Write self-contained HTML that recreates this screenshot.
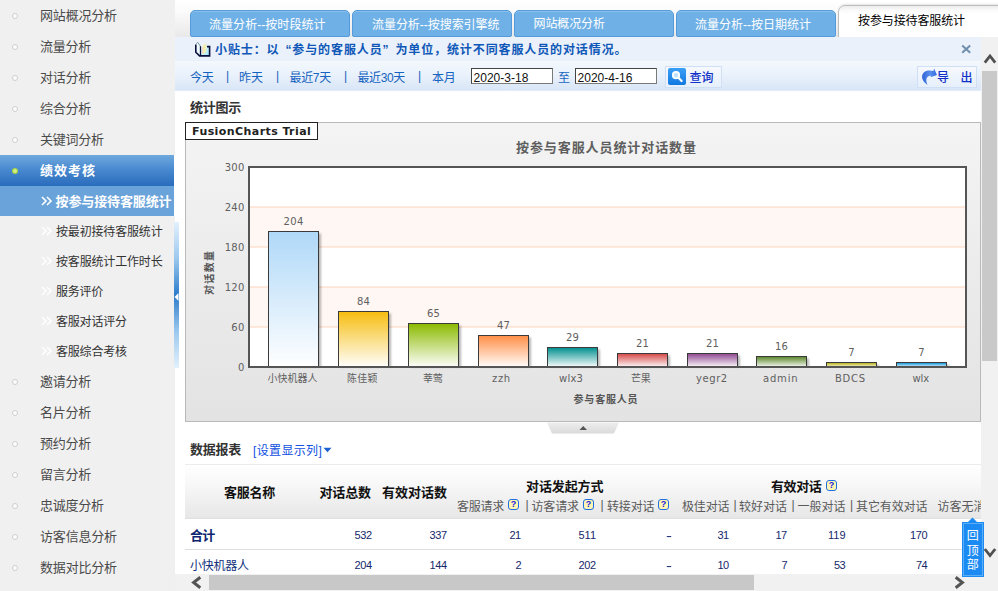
<!DOCTYPE html>
<html lang="zh-CN">
<head>
<meta charset="utf-8">
<title>按参与接待客服统计</title>
<style>
html,body{margin:0;padding:0;}
body{width:998px;height:591px;overflow:hidden;position:relative;background:#fff;font-family:"Liberation Sans","Noto Sans CJK SC",sans-serif;font-size:12px;color:#333;}
.a{position:absolute;}
.t{position:absolute;white-space:nowrap;}
#side{position:absolute;left:0;top:0;width:175px;height:591px;background:#f0f0f0;}
#side .dot{position:absolute;left:12px;width:4px;height:4px;border-radius:50%;border:1px solid #cecece;background:#fdfdfd;}
.tab{position:absolute;top:10px;height:25px;width:157.5px;background:#6fb1e6;border:1px solid #559bdb;border-radius:5px 5px 2px 2px;box-shadow:inset 0 1px 0 rgba(255,255,255,0.18);}
.help{position:absolute;width:9px;height:9px;border:1px solid #1f6fe0;border-radius:3px;background:#fff6b4;font:bold 9px/9.5px "Liberation Sans",sans-serif;color:#2020e0;text-align:center;font-style:normal;}
</style>
</head>
<body>
<!-- sidebar -->
<div id="side">
<div class="a" style="left:0;top:155px;width:174px;height:31px;background:linear-gradient(#6fa9dd 0%,#4a8ad0 45%,#2a6cbd 100%);border-right:1px solid #fff;"></div>
<div class="a" style="left:0;top:186px;width:174px;height:30px;background:#6aa3da;border-right:1px solid #fff;"></div>
<i class="a" style="left:12px;top:168px;width:6px;height:6px;border-radius:50%;background:radial-gradient(#d8f08a 20%,#9fcf3a 70%,#6fa0c0 100%);"></i>
<i class="dot" style="top:13.0px"></i>
<i class="dot" style="top:44.1px"></i>
<i class="dot" style="top:75.2px"></i>
<i class="dot" style="top:106.0px"></i>
<i class="dot" style="top:137.0px"></i>
<i class="dot" style="top:379.0px"></i>
<i class="dot" style="top:410.0px"></i>
<i class="dot" style="top:441.0px"></i>
<i class="dot" style="top:472.0px"></i>
<i class="dot" style="top:503.0px"></i>
<i class="dot" style="top:534.0px"></i>
<i class="dot" style="top:565.0px"></i>
<svg class="a" style="left:41px;top:195px" width="12" height="12" viewBox="0 0 12 12"><path d="M1 2 L5 6 L1 10 M6 2 L10 6 L6 10" fill="none" stroke="#fff" stroke-width="1.6"/></svg>
<svg class="a" style="left:41px;top:225px" width="12" height="12" viewBox="0 0 12 12"><path d="M1 2 L5 6 L1 10 M6 2 L10 6 L6 10" fill="none" stroke="#fff" stroke-width="1.4"/></svg>
<svg class="a" style="left:41px;top:255px" width="12" height="12" viewBox="0 0 12 12"><path d="M1 2 L5 6 L1 10 M6 2 L10 6 L6 10" fill="none" stroke="#fff" stroke-width="1.4"/></svg>
<svg class="a" style="left:41px;top:285px" width="12" height="12" viewBox="0 0 12 12"><path d="M1 2 L5 6 L1 10 M6 2 L10 6 L6 10" fill="none" stroke="#fff" stroke-width="1.4"/></svg>
<svg class="a" style="left:41px;top:315px" width="12" height="12" viewBox="0 0 12 12"><path d="M1 2 L5 6 L1 10 M6 2 L10 6 L6 10" fill="none" stroke="#fff" stroke-width="1.4"/></svg>
<svg class="a" style="left:41px;top:345px" width="12" height="12" viewBox="0 0 12 12"><path d="M1 2 L5 6 L1 10 M6 2 L10 6 L6 10" fill="none" stroke="#fff" stroke-width="1.4"/></svg>
</div>
<!-- splitter -->
<div class="a" style="left:174px;top:222px;width:5px;height:146px;background:linear-gradient(#e3f1fd 0%,#9cc8ee 25%,#2c7ccb 50%,#9cc8ee 75%,#e3f1fd 100%);"></div>
<svg class="a" style="left:174px;top:292px" width="5" height="10" viewBox="0 0 5 10"><path d="M4.5 1 L0.5 5 L4.5 9 Z" fill="#fff"/></svg>
<!-- tab strip -->
<div class="a" style="left:175px;top:0;width:823px;height:37px;background:linear-gradient(#ffffff 0%,#fbfbfb 30%,#e9e9e9 100%);"></div>
<div class="a" style="left:174px;top:0;width:1px;height:37px;background:#f0f0f0;"></div>
<div class="tab" style="left:190px"></div>
<div class="tab" style="left:352px"></div>
<div class="tab" style="left:514px"></div>
<div class="tab" style="left:676px"></div>
<div class="a" style="left:838px;top:5px;width:170px;height:40px;background:linear-gradient(#ececec 0px,#fafafa 4px,#fff 8px,#fff 100%);border:1px solid #bdbdbd;border-radius:7px 0 0 0;box-shadow:0 -1px 2px rgba(0,0,0,0.10);"></div>
<!-- tip bar -->
<div class="a" style="left:175px;top:37px;width:806px;height:24px;background:#ebf1fa;"></div>
<!-- filter bar -->
<div class="a" style="left:175px;top:61px;width:806px;height:29px;background:linear-gradient(#f4f8fd 0%,#e9f1fb 50%,#d9e6f7 100%);border-bottom:1px solid #e2ecf9;"></div>
<!-- tip icon -->
<svg class="a" style="left:194px;top:41px" width="17" height="17" viewBox="0 0 17 17">
<defs><linearGradient id="bk" x1="0" y1="0" x2="1" y2="1"><stop offset="0" stop-color="#ffffff"/><stop offset="1" stop-color="#9be4fa"/></linearGradient></defs>
<path d="M3.6 1.2 L6.2 5 L6.2 14 L1.6 11 L1.6 3.6 Z" fill="#eefbff"/>
<path d="M6.8 5.2 L9 3.6 L12.5 3.2 L12.5 5.2 L15.2 5.2 L15.2 14.6 L6.8 14.6 Z" fill="url(#bk)"/>
<path d="M8.6 4.6 C9.8 3.4 11 3 12.4 3.1 L12.3 10.5 C11.4 12.2 10 13 8.6 13.2 Z" fill="#f1f0b2"/>
<path d="M8.8 6 L8.8 12.6" stroke="#f6c8b8" stroke-width="0.9" fill="none"/>
<path d="M1.8 3.4 L1.8 11.2 L5.6 14.9 L15.6 14.9 L15.6 5.6 L13 5.6" fill="none" stroke="#0a0f3c" stroke-width="1.6" stroke-linejoin="miter"/>
<path d="M1.7 3.6 L3.6 1.2" stroke="#7f98a8" stroke-width="0.9" fill="none"/>
<path d="M6.5 5.2 L6.5 14.4" stroke="#0a0f3c" stroke-width="1.3" fill="none"/>
<path d="M3.7 1.3 L6.3 5" stroke="#5a7a8a" stroke-width="0.8" fill="none"/>
</svg>
<!-- close x -->
<svg class="a" style="left:961px;top:44px" width="11" height="10" viewBox="0 0 11 10"><path d="M1.2 1.4 L9.2 8.8 M9.2 1.4 L1.2 8.8" stroke="#6f8fae" stroke-width="2" fill="none"/></svg>
<!-- date inputs -->
<div class="a" style="left:471px;top:68px;width:80px;height:14px;background:#fff;border:1px solid #7a7a7a;border-top-color:#444;border-left-color:#444;"></div>
<div class="a" style="left:575px;top:68px;width:80px;height:14px;background:#fff;border:1px solid #7a7a7a;border-top-color:#444;border-left-color:#444;"></div>
<!-- search button -->
<div class="a" style="left:665px;top:66px;width:55px;height:20px;background:linear-gradient(#f6f9fe,#e6effb);border:1px solid #cfdff5;"></div>
<svg class="a" style="left:668px;top:68px" width="18" height="17" viewBox="0 0 18 17">
<defs><linearGradient id="sb" x1="0" y1="0" x2="0" y2="1"><stop offset="0" stop-color="#3aa0f6"/><stop offset="1" stop-color="#1278e0"/></linearGradient></defs>
<rect x="0" y="0" width="18" height="17" rx="2" fill="url(#sb)"/>
<circle cx="8" cy="7.2" r="3.2" fill="#bfe2ff" stroke="#fff" stroke-width="1.8"/>
<path d="M10.5 9.8 L13.6 13" stroke="#fff" stroke-width="2.2" stroke-linecap="round"/>
</svg>
<!-- export button -->
<div class="a" style="left:917px;top:66px;width:58px;height:20px;background:linear-gradient(#f6f9fe,#e6effb);border:1px solid #cfdff5;"></div>
<svg class="a" style="left:921px;top:67px" width="17" height="19" viewBox="0 0 17 19">
<defs><linearGradient id="ex" x1="0" y1="0" x2="1" y2="0"><stop offset="0" stop-color="#2f66d6"/><stop offset="0.55" stop-color="#5a8fee"/><stop offset="1" stop-color="#2f6ae0"/></linearGradient></defs>
<path d="M13.1 1.5 L16 8 L9.4 10.2 L10 8.5 C7.4 8.6 5.3 10.4 5.3 13 C5.3 14.8 5.8 16.4 6.7 17.9 C3 16 0.5 12.4 1.2 8.6 C2 4.2 7 2.4 12.4 4 Z" fill="url(#ex)"/>
</svg>
<!-- chart -->
<svg class="a" style="left:0;top:0" width="998" height="591" viewBox="0 0 998 591" shape-rendering="auto">
<defs>
<linearGradient id="g0" x1="0" y1="0" x2="0" y2="1"><stop offset="0" stop-color="#AFD8F8"/><stop offset="1" stop-color="#ffffff"/></linearGradient>
<linearGradient id="g1" x1="0" y1="0" x2="0" y2="1"><stop offset="0" stop-color="#F6BD0F"/><stop offset="1" stop-color="#ffffff"/></linearGradient>
<linearGradient id="g2" x1="0" y1="0" x2="0" y2="1"><stop offset="0" stop-color="#8BBA00"/><stop offset="1" stop-color="#ffffff"/></linearGradient>
<linearGradient id="g3" x1="0" y1="0" x2="0" y2="1"><stop offset="0" stop-color="#FF8E46"/><stop offset="1" stop-color="#ffffff"/></linearGradient>
<linearGradient id="g4" x1="0" y1="0" x2="0" y2="1"><stop offset="0" stop-color="#008E8E"/><stop offset="1" stop-color="#ffffff"/></linearGradient>
<linearGradient id="g5" x1="0" y1="0" x2="0" y2="1"><stop offset="0" stop-color="#D64646"/><stop offset="1" stop-color="#ffffff"/></linearGradient>
<linearGradient id="g6" x1="0" y1="0" x2="0" y2="1"><stop offset="0" stop-color="#8E468E"/><stop offset="1" stop-color="#ffffff"/></linearGradient>
<linearGradient id="g7" x1="0" y1="0" x2="0" y2="1"><stop offset="0" stop-color="#588526"/><stop offset="1" stop-color="#ffffff"/></linearGradient>
<linearGradient id="g8" x1="0" y1="0" x2="0" y2="1"><stop offset="0" stop-color="#B3AA00"/><stop offset="1" stop-color="#ffffff"/></linearGradient>
<linearGradient id="g9" x1="0" y1="0" x2="0" y2="1"><stop offset="0" stop-color="#008ED6"/><stop offset="1" stop-color="#ffffff"/></linearGradient>
<linearGradient id="cbg" x1="0" y1="0" x2="0" y2="1"><stop offset="0" stop-color="#f4f4f4"/><stop offset="1" stop-color="#e3e3e3"/></linearGradient>
<filter id="bl" x="-10%" y="-10%" width="120%" height="120%"><feGaussianBlur stdDeviation="1"/></filter>
<linearGradient id="trap" x1="0" y1="0" x2="0" y2="1"><stop offset="0" stop-color="#eeeeee"/><stop offset="1" stop-color="#dadada"/></linearGradient>
</defs>
<rect x="185.5" y="122.5" width="795" height="299" fill="url(#cbg)" stroke="#b9b9b9"/>
<rect x="249" y="167" width="717" height="200" fill="#fff"/>
<rect x="249" y="207.0" width="717" height="40.0" fill="#fff7f3"/>
<rect x="249" y="287.0" width="717" height="40.0" fill="#fff7f3"/>
<rect x="249" y="326.5" width="717" height="1" fill="#fbd4bd"/>
<rect x="249" y="286.5" width="717" height="1" fill="#fbd4bd"/>
<rect x="249" y="246.5" width="717" height="1" fill="#fbd4bd"/>
<rect x="249" y="206.5" width="717" height="1" fill="#fbd4bd"/>
<rect x="270.5" y="233.5" width="50.5" height="133.5" fill="#000" opacity="0.28" filter="url(#bl)"/>
<rect x="268.5" y="231.5" width="50" height="136.0" fill="url(#g0)" stroke="#3a3a3a" stroke-width="1"/>
<rect x="340.5" y="313.5" width="50.5" height="53.5" fill="#000" opacity="0.28" filter="url(#bl)"/>
<rect x="338.5" y="311.5" width="50" height="56.0" fill="url(#g1)" stroke="#3a3a3a" stroke-width="1"/>
<rect x="410.5" y="325.5" width="50.5" height="41.5" fill="#000" opacity="0.28" filter="url(#bl)"/>
<rect x="408.5" y="323.5" width="50" height="44.0" fill="url(#g2)" stroke="#3a3a3a" stroke-width="1"/>
<rect x="480.5" y="337.5" width="50.5" height="29.5" fill="#000" opacity="0.28" filter="url(#bl)"/>
<rect x="478.5" y="335.5" width="50" height="32.0" fill="url(#g3)" stroke="#3a3a3a" stroke-width="1"/>
<rect x="549.5" y="349.5" width="50.5" height="17.5" fill="#000" opacity="0.28" filter="url(#bl)"/>
<rect x="547.5" y="347.5" width="50" height="20.0" fill="url(#g4)" stroke="#3a3a3a" stroke-width="1"/>
<rect x="619.5" y="355.5" width="50.5" height="11.5" fill="#000" opacity="0.28" filter="url(#bl)"/>
<rect x="617.5" y="353.5" width="50" height="14.0" fill="url(#g5)" stroke="#3a3a3a" stroke-width="1"/>
<rect x="689.5" y="355.5" width="50.5" height="11.5" fill="#000" opacity="0.28" filter="url(#bl)"/>
<rect x="687.5" y="353.5" width="50" height="14.0" fill="url(#g6)" stroke="#3a3a3a" stroke-width="1"/>
<rect x="758.5" y="358.5" width="50.5" height="8.5" fill="#000" opacity="0.28" filter="url(#bl)"/>
<rect x="756.5" y="356.5" width="50" height="11.0" fill="url(#g7)" stroke="#3a3a3a" stroke-width="1"/>
<rect x="828.5" y="364.5" width="50.5" height="2.5" fill="#000" opacity="0.28" filter="url(#bl)"/>
<rect x="826.5" y="362.5" width="50" height="5.0" fill="url(#g8)" stroke="#3a3a3a" stroke-width="1"/>
<rect x="898.5" y="364.5" width="50.5" height="2.5" fill="#000" opacity="0.28" filter="url(#bl)"/>
<rect x="896.5" y="362.5" width="50" height="5.0" fill="url(#g9)" stroke="#3a3a3a" stroke-width="1"/>
<rect x="249" y="167" width="717" height="200" fill="none" stroke="#555" stroke-width="2"/>
<rect x="185.5" y="122.5" width="132" height="17" fill="#fff" stroke="#222"/>
<path d="M547 422.5 L619 422.5 L614 433.5 L552 433.5 Z" fill="url(#trap)"/>
<path d="M579.5 430 L583.2 426 L587 430 Z" fill="#555"/>
</svg>
<!-- y axis title -->
<span class="a" style="left:209px;top:273px;width:0;height:0;"><span style="position:absolute;left:-30px;top:-7px;width:60px;height:14px;line-height:14px;text-align:center;transform:rotate(-90deg);font:bold 10px/14px 'Noto Sans CJK SC',sans-serif;color:#555;white-space:nowrap;letter-spacing:1.3px;text-indent:1.3px;">对话数量</span></span>
<!-- dropdown arrow -->
<svg class="a" style="left:323px;top:447px" width="9" height="6" viewBox="0 0 9 6"><path d="M0.5 0.8 L8.5 0.8 L4.5 5.2 Z" fill="#1c5fd0"/></svg>
<!-- table -->
<div class="a" style="left:185px;top:464px;width:796px;height:54px;background:linear-gradient(#ffffff 0%,#f7f7f7 40%,#e7e7e7 100%);border-top:1px solid #ececec;box-sizing:border-box;"></div>
<div class="a" style="left:185px;top:518px;width:796px;height:1px;background:#e0e0e0;"></div>
<div class="a" style="left:185px;top:549px;width:796px;height:1px;background:#dedede;"></div>
<!-- help icons -->
<i class="help" style="left:508px;top:499px">?</i><i class="help" style="left:583px;top:499px">?</i><i class="help" style="left:658px;top:499px">?</i><i class="help" style="left:826px;top:480px">?</i>
<!-- clipped header -->
<div class="a" style="left:937px;top:496px;width:44px;height:20px;overflow:hidden;"><span style="position:absolute;left:0.5px;top:2px;font:12px/16px 'Noto Sans CJK SC',sans-serif;color:#5a5a5a;white-space:nowrap;">访客无消息对话</span></div>
<!-- h scrollbar -->
<div class="a" style="left:175px;top:574px;width:806px;height:17px;background:#f1f1f1;"></div>
<div class="a" style="left:209px;top:575px;width:545px;height:15px;background:#c8c8c8;"></div>
<svg class="a" style="left:190px;top:576px" width="13" height="13" viewBox="0 0 13 13"><path d="M10.3 1.2 L3.6 6.5 L10.3 11.8" fill="none" stroke="#555" stroke-width="3"/></svg>
<svg class="a" style="left:953px;top:576px" width="13" height="13" viewBox="0 0 13 13"><path d="M2.7 1.2 L9.4 6.5 L2.7 11.8" fill="none" stroke="#555" stroke-width="3"/></svg>
<!-- v scrollbar -->
<div class="a" style="left:981px;top:37px;width:17px;height:554px;background:#f1f1f1;"></div>
<div class="a" style="left:982px;top:71px;width:15px;height:290px;background:#c9c9c9;"></div>
<svg class="a" style="left:983px;top:52px" width="14" height="12" viewBox="0 0 14 12"><path d="M1.8 10.6 L7 4 L12.2 10.6" fill="none" stroke="#505050" stroke-width="2.8"/></svg>
<svg class="a" style="left:983px;top:546px" width="14" height="12" viewBox="0 0 14 12"><path d="M1.8 3 L7 9.6 L12.2 3" fill="none" stroke="#505050" stroke-width="2.8"/></svg>
<!-- back to top -->
<div class="a" style="left:962px;top:522px;width:22px;height:55px;background:#1b8af3;box-sizing:border-box;border:1px solid #1b8af3;box-shadow:inset 0 0 0 1px #5aaef8;"></div>
<svg class="a" style="left:967px;top:517px" width="11" height="6" viewBox="0 0 11 6"><path d="M0 6 L5.5 0.5 L11 6 Z" fill="#1b8af3"/></svg>
<span class="a" style="left:966.8px;top:528px;width:12px;font:12px/14.5px 'Noto Sans CJK SC',sans-serif;color:#fff;white-space:normal;word-break:break-all;">回顶部</span>
<span class="t" style='left:40.00px;top:7.10px;font:13px/17px "Liberation Sans","Noto Sans CJK SC",sans-serif;color:#4a4a4a;letter-spacing:-0.185px;'>网站概况分析</span>
<span class="t" style='left:40.00px;top:38.10px;font:13px/17px "Liberation Sans","Noto Sans CJK SC",sans-serif;color:#4a4a4a;letter-spacing:-0.290px;'>流量分析</span>
<span class="t" style='left:40.00px;top:69.10px;font:13px/17px "Liberation Sans","Noto Sans CJK SC",sans-serif;color:#4a4a4a;letter-spacing:-0.290px;'>对话分析</span>
<span class="t" style='left:40.00px;top:100.10px;font:13px/17px "Liberation Sans","Noto Sans CJK SC",sans-serif;color:#4a4a4a;letter-spacing:-0.290px;'>综合分析</span>
<span class="t" style='left:40.00px;top:131.10px;font:13px/17px "Liberation Sans","Noto Sans CJK SC",sans-serif;color:#4a4a4a;letter-spacing:-0.226px;'>关键词分析</span>
<span class="t" style='left:40.00px;top:373.10px;font:13px/17px "Liberation Sans","Noto Sans CJK SC",sans-serif;color:#4a4a4a;letter-spacing:-0.290px;'>邀请分析</span>
<span class="t" style='left:40.00px;top:404.10px;font:13px/17px "Liberation Sans","Noto Sans CJK SC",sans-serif;color:#4a4a4a;letter-spacing:-0.290px;'>名片分析</span>
<span class="t" style='left:40.00px;top:435.10px;font:13px/17px "Liberation Sans","Noto Sans CJK SC",sans-serif;color:#4a4a4a;letter-spacing:-0.290px;'>预约分析</span>
<span class="t" style='left:40.00px;top:466.10px;font:13px/17px "Liberation Sans","Noto Sans CJK SC",sans-serif;color:#4a4a4a;letter-spacing:-0.290px;'>留言分析</span>
<span class="t" style='left:40.00px;top:497.10px;font:13px/17px "Liberation Sans","Noto Sans CJK SC",sans-serif;color:#4a4a4a;letter-spacing:-0.226px;'>忠诚度分析</span>
<span class="t" style='left:40.00px;top:528.10px;font:13px/17px "Liberation Sans","Noto Sans CJK SC",sans-serif;color:#4a4a4a;letter-spacing:-0.185px;'>访客信息分析</span>
<span class="t" style='left:40.00px;top:559.10px;font:13px/17px "Liberation Sans","Noto Sans CJK SC",sans-serif;color:#4a4a4a;letter-spacing:-0.185px;'>数据对比分析</span>
<span class="t" style='left:40.00px;top:162.10px;font:bold 13px/17px "Liberation Sans","Noto Sans CJK SC",sans-serif;color:#fff;letter-spacing:0.996px;'>绩效考核</span>
<span class="t" style='left:55.50px;top:193.10px;font:bold 13px/17px "Liberation Sans","Noto Sans CJK SC",sans-serif;color:#fff;letter-spacing:-0.119px;'>按参与接待客服统计</span>
<span class="t" style='left:56.00px;top:224.10px;font:12px/16px "Liberation Sans","Noto Sans CJK SC",sans-serif;color:#333;letter-spacing:-0.167px;'>按最初接待客服统计</span>
<span class="t" style='left:56.00px;top:254.10px;font:12px/16px "Liberation Sans","Noto Sans CJK SC",sans-serif;color:#333;letter-spacing:-0.167px;'>按客服统计工作时长</span>
<span class="t" style='left:56.00px;top:284.10px;font:12px/16px "Liberation Sans","Noto Sans CJK SC",sans-serif;color:#333;letter-spacing:-0.262px;'>服务评价</span>
<span class="t" style='left:56.00px;top:314.10px;font:12px/16px "Liberation Sans","Noto Sans CJK SC",sans-serif;color:#333;letter-spacing:-0.203px;'>客服对话评分</span>
<span class="t" style='left:56.00px;top:344.10px;font:12px/16px "Liberation Sans","Noto Sans CJK SC",sans-serif;color:#333;letter-spacing:-0.203px;'>客服综合考核</span>
<span class="t" style='left:209.00px;top:17.10px;font:12px/16px "Liberation Sans","Noto Sans CJK SC",sans-serif;color:#fff;letter-spacing:0.048px;'>流量分析--按时段统计</span>
<span class="t" style='left:372.00px;top:17.10px;font:12px/16px "Liberation Sans","Noto Sans CJK SC",sans-serif;color:#fff;letter-spacing:-0.043px;'>流量分析--按搜索引擎统</span>
<span class="t" style='left:533.50px;top:16.10px;font:12px/16px "Liberation Sans","Noto Sans CJK SC",sans-serif;color:#fff;letter-spacing:-0.094px;'>网站概况分析</span>
<span class="t" style='left:695.00px;top:17.10px;font:12px/16px "Liberation Sans","Noto Sans CJK SC",sans-serif;color:#fff;'>流量分析--按日期统计</span>
<span class="t" style='left:858.00px;top:13.10px;font:12px/16px "Liberation Sans","Noto Sans CJK SC",sans-serif;color:#000;letter-spacing:-0.119px;'>按参与接待客服统计</span>
<span class="t" style='left:215.00px;top:42.10px;font:bold 12px/16px "Liberation Sans","Noto Sans CJK SC",sans-serif;color:#0f58b8;letter-spacing:0.887px;'>小贴士：以<span style="margin-left:6px">“</span>参与的客服人员<span style="margin-right:6px">”</span>为单位，统计不同客服人员的对话情况。</span>
<span class="t" style='left:190.00px;top:70.10px;font:12px/16px "Liberation Sans","Noto Sans CJK SC",sans-serif;color:#1563c0;letter-spacing:-0.344px;'>今天</span>
<span class="t" style='left:226.00px;top:70.10px;font:12px/16px "Liberation Sans","Noto Sans CJK SC",sans-serif;color:#1563c0;transform:translateY(-2px) scaleY(1.12);'>|</span>
<span class="t" style='left:239.00px;top:70.10px;font:12px/16px "Liberation Sans","Noto Sans CJK SC",sans-serif;color:#1563c0;letter-spacing:-0.010px;'>昨天</span>
<span class="t" style='left:276.00px;top:70.10px;font:12px/16px "Liberation Sans","Noto Sans CJK SC",sans-serif;color:#1563c0;transform:translateY(-2px) scaleY(1.12);'>|</span>
<span class="t" style='left:289.50px;top:70.10px;font:12px/16px "Liberation Sans","Noto Sans CJK SC",sans-serif;color:#1563c0;letter-spacing:-0.339px;'>最近7天</span>
<span class="t" style='left:344.00px;top:70.10px;font:12px/16px "Liberation Sans","Noto Sans CJK SC",sans-serif;color:#1563c0;transform:translateY(-2px) scaleY(1.12);'>|</span>
<span class="t" style='left:357.50px;top:70.10px;font:12px/16px "Liberation Sans","Noto Sans CJK SC",sans-serif;color:#1563c0;letter-spacing:-0.413px;'>最近30天</span>
<span class="t" style='left:418.00px;top:70.10px;font:12px/16px "Liberation Sans","Noto Sans CJK SC",sans-serif;color:#1563c0;transform:translateY(-2px) scaleY(1.12);'>|</span>
<span class="t" style='left:432.00px;top:70.10px;font:12px/16px "Liberation Sans","Noto Sans CJK SC",sans-serif;color:#1563c0;letter-spacing:-0.344px;'>本月</span>
<span class="t" style='left:558.00px;top:70.10px;font:12px/16px "Liberation Sans","Noto Sans CJK SC",sans-serif;color:#1563c0;'>至</span>
<span class="t" style='left:473.50px;top:70.10px;font:12px/16px "Liberation Sans","Noto Sans CJK SC",sans-serif;color:#111;letter-spacing:0.033px;'>2020-3-18</span>
<span class="t" style='left:577.50px;top:70.10px;font:12px/16px "Liberation Sans","Noto Sans CJK SC",sans-serif;color:#111;letter-spacing:0.033px;'>2020-4-16</span>
<span class="t" style='left:689.50px;top:70.10px;font:12px/16px "Liberation Sans","Noto Sans CJK SC",sans-serif;color:#1030c8;letter-spacing:-0.010px;font-weight:500;'>查询</span>
<span class="t" style='left:937.00px;top:70.10px;font:12px/16px "Liberation Sans","Noto Sans CJK SC",sans-serif;color:#1030c8;font-weight:500;'>导</span>
<span class="t" style='left:960.50px;top:70.10px;font:12px/16px "Liberation Sans","Noto Sans CJK SC",sans-serif;color:#1030c8;font-weight:500;'>出</span>
<span class="t" style='left:190.00px;top:99.10px;font:bold 13px/17px "Liberation Sans","Noto Sans CJK SC",sans-serif;color:#333;letter-spacing:-0.290px;'>统计图示</span>
<span class="t" style='left:190.00px;top:441.10px;font:bold 13px/17px "Liberation Sans","Noto Sans CJK SC",sans-serif;color:#333;letter-spacing:-0.290px;'>数据报表</span>
<span class="t" style='left:253.00px;top:443.10px;font:12px/16px "Liberation Sans","Noto Sans CJK SC",sans-serif;color:#1050e0;letter-spacing:0.358px;'>[设置显示列]</span>
<span class="t" style='left:224.00px;top:484.10px;font:bold 13px/17px "Liberation Sans","Noto Sans CJK SC",sans-serif;color:#111;letter-spacing:-0.290px;'>客服名称</span>
<span class="t" style='left:319.50px;top:484.10px;font:bold 13px/17px "Liberation Sans","Noto Sans CJK SC",sans-serif;color:#111;letter-spacing:-0.147px;'>对话总数</span>
<span class="t" style='left:382.00px;top:484.10px;font:bold 13px/17px "Liberation Sans","Noto Sans CJK SC",sans-serif;color:#111;'>有效对话数</span>
<span class="t" style='left:526.00px;top:478.10px;font:bold 13px/17px "Liberation Sans","Noto Sans CJK SC",sans-serif;color:#111;letter-spacing:-0.094px;'>对话发起方式</span>
<span class="t" style='left:771.00px;top:478.10px;font:bold 13px/17px "Liberation Sans","Noto Sans CJK SC",sans-serif;color:#111;letter-spacing:-0.433px;'>有效对话</span>
<span class="t" style='left:457.00px;top:499.10px;font:12px/16px "Liberation Sans","Noto Sans CJK SC",sans-serif;color:#5a5a5a;letter-spacing:-0.290px;'>客服请求</span>
<span class="t" style='left:525.50px;top:499.10px;font:12px/16px "Liberation Sans","Noto Sans CJK SC",sans-serif;color:#5a5a5a;transform:translateY(-2px) scaleY(1.12);'>|</span>
<span class="t" style='left:531.50px;top:499.10px;font:12px/16px "Liberation Sans","Noto Sans CJK SC",sans-serif;color:#5a5a5a;letter-spacing:-0.147px;'>访客请求</span>
<span class="t" style='left:600.50px;top:499.10px;font:12px/16px "Liberation Sans","Noto Sans CJK SC",sans-serif;color:#5a5a5a;transform:translateY(-2px) scaleY(1.12);'>|</span>
<span class="t" style='left:607.00px;top:499.10px;font:12px/16px "Liberation Sans","Noto Sans CJK SC",sans-serif;color:#5a5a5a;letter-spacing:-0.147px;'>转接对话</span>
<span class="t" style='left:682.00px;top:499.10px;font:12px/16px "Liberation Sans","Noto Sans CJK SC",sans-serif;color:#5a5a5a;letter-spacing:-0.147px;'>极佳对话</span>
<span class="t" style='left:733.50px;top:499.10px;font:12px/16px "Liberation Sans","Noto Sans CJK SC",sans-serif;color:#5a5a5a;transform:translateY(-2px) scaleY(1.12);'>|</span>
<span class="t" style='left:739.00px;top:499.10px;font:12px/16px "Liberation Sans","Noto Sans CJK SC",sans-serif;color:#5a5a5a;'>较好对话</span>
<span class="t" style='left:791.50px;top:499.10px;font:12px/16px "Liberation Sans","Noto Sans CJK SC",sans-serif;color:#5a5a5a;transform:translateY(-2px) scaleY(1.12);'>|</span>
<span class="t" style='left:797.50px;top:499.10px;font:12px/16px "Liberation Sans","Noto Sans CJK SC",sans-serif;color:#5a5a5a;'>一般对话</span>
<span class="t" style='left:850.00px;top:499.10px;font:12px/16px "Liberation Sans","Noto Sans CJK SC",sans-serif;color:#5a5a5a;transform:translateY(-2px) scaleY(1.12);'>|</span>
<span class="t" style='left:856.00px;top:499.10px;font:12px/16px "Liberation Sans","Noto Sans CJK SC",sans-serif;color:#5a5a5a;letter-spacing:-0.094px;'>其它有效对话</span>
<span class="t" style='left:190.00px;top:527.10px;font:bold 13px/17px "Liberation Sans","Noto Sans CJK SC",sans-serif;color:#0f2470;letter-spacing:-0.677px;'>合计</span>
<span class="t" style='left:190.00px;top:558.10px;font:12px/16px "Liberation Sans","Noto Sans CJK SC",sans-serif;color:#12307c;letter-spacing:-0.226px;'>小快机器人</span>
<span class="t" style='left:354.50px;top:528.00px;font:11px/15px "Liberation Sans","Noto Sans CJK SC",sans-serif;color:#15296b;letter-spacing:-0.344px;'>532</span>
<span class="t" style='left:429.50px;top:528.00px;font:11px/15px "Liberation Sans","Noto Sans CJK SC",sans-serif;color:#15296b;letter-spacing:-0.344px;'>337</span>
<span class="t" style='left:509.50px;top:528.00px;font:11px/15px "Liberation Sans","Noto Sans CJK SC",sans-serif;color:#15296b;letter-spacing:-0.500px;'>21</span>
<span class="t" style='left:578.50px;top:528.00px;font:11px/15px "Liberation Sans","Noto Sans CJK SC",sans-serif;color:#15296b;letter-spacing:-0.019px;'>511</span>
<span class="t" style='left:717.50px;top:528.00px;font:11px/15px "Liberation Sans","Noto Sans CJK SC",sans-serif;color:#15296b;letter-spacing:-0.500px;'>31</span>
<span class="t" style='left:775.50px;top:528.00px;font:11px/15px "Liberation Sans","Noto Sans CJK SC",sans-serif;color:#15296b;letter-spacing:-0.500px;'>17</span>
<span class="t" style='left:828.00px;top:528.00px;font:11px/15px "Liberation Sans","Noto Sans CJK SC",sans-serif;color:#15296b;letter-spacing:-0.019px;'>119</span>
<span class="t" style='left:910.00px;top:528.00px;font:11px/15px "Liberation Sans","Noto Sans CJK SC",sans-serif;color:#15296b;letter-spacing:-0.344px;'>170</span>
<span class="t" style='left:354.50px;top:558.00px;font:11px/15px "Liberation Sans","Noto Sans CJK SC",sans-serif;color:#15296b;letter-spacing:-0.344px;'>204</span>
<span class="t" style='left:429.50px;top:558.00px;font:11px/15px "Liberation Sans","Noto Sans CJK SC",sans-serif;color:#15296b;letter-spacing:-0.344px;'>144</span>
<span class="t" style='left:515.50px;top:558.00px;font:11px/15px "Liberation Sans","Noto Sans CJK SC",sans-serif;color:#15296b;'>2</span>
<span class="t" style='left:578.50px;top:558.00px;font:11px/15px "Liberation Sans","Noto Sans CJK SC",sans-serif;color:#15296b;letter-spacing:-0.344px;'>202</span>
<span class="t" style='left:717.50px;top:558.00px;font:11px/15px "Liberation Sans","Noto Sans CJK SC",sans-serif;color:#15296b;letter-spacing:-0.500px;'>10</span>
<span class="t" style='left:781.50px;top:558.00px;font:11px/15px "Liberation Sans","Noto Sans CJK SC",sans-serif;color:#15296b;'>7</span>
<span class="t" style='left:834.00px;top:558.00px;font:11px/15px "Liberation Sans","Noto Sans CJK SC",sans-serif;color:#15296b;letter-spacing:-0.500px;'>53</span>
<span class="t" style='left:916.00px;top:558.00px;font:11px/15px "Liberation Sans","Noto Sans CJK SC",sans-serif;color:#15296b;letter-spacing:-0.500px;'>74</span>
<span class="t" style='left:666.00px;top:528.10px;font:12px/16px "Liberation Sans","Noto Sans CJK SC",sans-serif;color:#15296b;transform:scaleX(1.5);transform-origin:0 50%;'>-</span>
<span class="t" style='left:666.00px;top:558.10px;font:12px/16px "Liberation Sans","Noto Sans CJK SC",sans-serif;color:#15296b;transform:scaleX(1.5);transform-origin:0 50%;'>-</span>
<span class="t" style='left:237.90px;top:361.00px;font:10px/14px "DejaVu Sans","Noto Sans CJK SC",sans-serif;color:#606060;'>0</span>
<span class="t" style='left:231.30px;top:321.00px;font:10px/14px "DejaVu Sans","Noto Sans CJK SC",sans-serif;color:#606060;letter-spacing:0.310px;'>60</span>
<span class="t" style='left:224.70px;top:281.00px;font:10px/14px "DejaVu Sans","Noto Sans CJK SC",sans-serif;color:#606060;letter-spacing:0.283px;'>120</span>
<span class="t" style='left:224.70px;top:241.00px;font:10px/14px "DejaVu Sans","Noto Sans CJK SC",sans-serif;color:#606060;letter-spacing:0.283px;'>180</span>
<span class="t" style='left:224.70px;top:201.00px;font:10px/14px "DejaVu Sans","Noto Sans CJK SC",sans-serif;color:#606060;letter-spacing:0.283px;'>240</span>
<span class="t" style='left:224.70px;top:161.00px;font:10px/14px "DejaVu Sans","Noto Sans CJK SC",sans-serif;color:#606060;letter-spacing:0.283px;'>300</span>
<span class="t" style='left:283.60px;top:214.50px;font:10px/14px "DejaVu Sans","Noto Sans CJK SC",sans-serif;color:#606060;letter-spacing:0.282px;'>204</span>
<span class="t" style='left:356.90px;top:294.50px;font:10px/14px "DejaVu Sans","Noto Sans CJK SC",sans-serif;color:#606060;letter-spacing:0.310px;'>84</span>
<span class="t" style='left:426.90px;top:307.17px;font:10px/14px "DejaVu Sans","Noto Sans CJK SC",sans-serif;color:#606060;letter-spacing:0.310px;'>65</span>
<span class="t" style='left:496.90px;top:319.17px;font:10px/14px "DejaVu Sans","Noto Sans CJK SC",sans-serif;color:#606060;letter-spacing:0.310px;'>47</span>
<span class="t" style='left:565.90px;top:331.17px;font:10px/14px "DejaVu Sans","Noto Sans CJK SC",sans-serif;color:#606060;letter-spacing:0.310px;'>29</span>
<span class="t" style='left:635.90px;top:336.50px;font:10px/14px "DejaVu Sans","Noto Sans CJK SC",sans-serif;color:#606060;letter-spacing:0.310px;'>21</span>
<span class="t" style='left:705.90px;top:336.50px;font:10px/14px "DejaVu Sans","Noto Sans CJK SC",sans-serif;color:#606060;letter-spacing:0.310px;'>21</span>
<span class="t" style='left:774.90px;top:339.83px;font:10px/14px "DejaVu Sans","Noto Sans CJK SC",sans-serif;color:#606060;letter-spacing:0.310px;'>16</span>
<span class="t" style='left:848.20px;top:345.83px;font:10px/14px "DejaVu Sans","Noto Sans CJK SC",sans-serif;color:#606060;'>7</span>
<span class="t" style='left:918.20px;top:345.83px;font:10px/14px "DejaVu Sans","Noto Sans CJK SC",sans-serif;color:#606060;'>7</span>
<span class="t" style='left:267.50px;top:371.50px;font:10px/14px "DejaVu Sans","Noto Sans CJK SC",sans-serif;color:#606060;'>小快机器人</span>
<span class="t" style='left:347.00px;top:371.50px;font:10px/14px "DejaVu Sans","Noto Sans CJK SC",sans-serif;color:#606060;letter-spacing:0.200px;'>陈佳颖</span>
<span class="t" style='left:423.00px;top:371.50px;font:10px/14px "DejaVu Sans","Noto Sans CJK SC",sans-serif;color:#606060;letter-spacing:-0.333px;'>莘莺</span>
<span class="t" style='left:492.00px;top:371.50px;font:10px/14px "DejaVu Sans","Noto Sans CJK SC",sans-serif;color:#606060;letter-spacing:0.662px;'>zzh</span>
<span class="t" style='left:559.00px;top:371.50px;font:10px/14px "DejaVu Sans","Noto Sans CJK SC",sans-serif;color:#606060;letter-spacing:0.214px;'>wlx3</span>
<span class="t" style='left:631.00px;top:371.50px;font:10px/14px "DejaVu Sans","Noto Sans CJK SC",sans-serif;color:#606060;letter-spacing:-0.333px;'>芒果</span>
<span class="t" style='left:696.00px;top:371.50px;font:10px/14px "DejaVu Sans","Noto Sans CJK SC",sans-serif;color:#606060;letter-spacing:0.576px;'>yegr2</span>
<span class="t" style='left:763.00px;top:371.50px;font:10px/14px "DejaVu Sans","Noto Sans CJK SC",sans-serif;color:#606060;letter-spacing:0.812px;'>admin</span>
<span class="t" style='left:835.00px;top:371.50px;font:10px/14px "DejaVu Sans","Noto Sans CJK SC",sans-serif;color:#606060;letter-spacing:0.746px;'>BDCS</span>
<span class="t" style='left:912.50px;top:371.50px;font:10px/14px "DejaVu Sans","Noto Sans CJK SC",sans-serif;color:#606060;letter-spacing:-0.150px;'>wlx</span>
<span class="t" style='left:516.00px;top:139.10px;font:bold 13px/17px "Liberation Sans","Noto Sans CJK SC",sans-serif;color:#5e5e5e;letter-spacing:0.919px;'>按参与客服人员统计对话数量</span>
<span class="t" style='left:573.50px;top:392.50px;font:bold 10px/14px "Liberation Sans","Noto Sans CJK SC",sans-serif;color:#555;letter-spacing:0.818px;'>参与客服人员</span>
<span class="t" style='left:192.00px;top:124.00px;font:bold 11px/15px "DejaVu Sans","Noto Sans CJK SC",sans-serif;color:#222;letter-spacing:0.424px;'>FusionCharts Trial</span>
</body>
</html>
